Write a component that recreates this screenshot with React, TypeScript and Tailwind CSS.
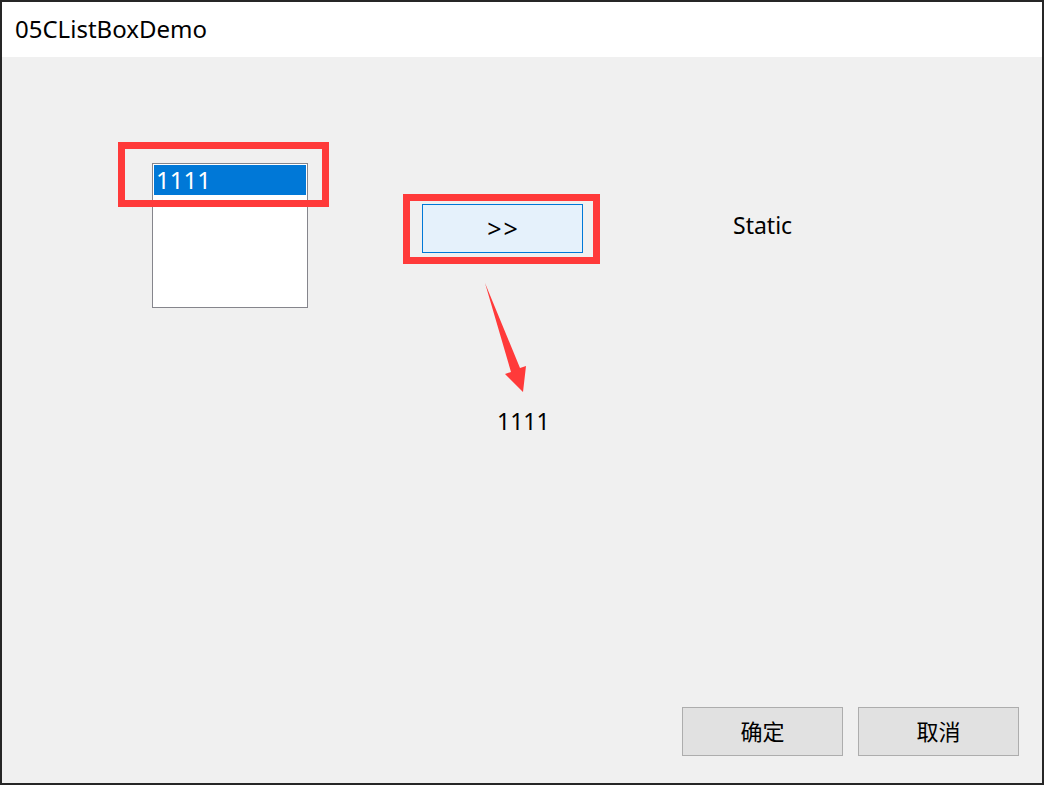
const font = "font-['Noto_Sans','Noto_Sans_CJK_SC',sans-serif]";

function RedBox({ className }: { className: string }) {
  return (
    <div
      className={`pointer-events-none absolute border-[7px] border-[#ff3a3a] ${className}`}
    />
  );
}

export default function App() {
  return (
    <div
      className={`w-[1044px] h-[785px] bg-[#262626] p-[2px] flex flex-col text-black ${font}`}
    >
      {/* Title bar */}
      <div className="h-[55px] bg-white flex items-center pl-[13px] pb-[2px] text-[24px]">
        05CListBoxDemo
      </div>

      {/* Client area */}
      <div className="flex-1 bg-[#f0f0f0] relative flex flex-col">
        <div className="flex items-start pl-[150px] pt-[106px]">
          {/* List box */}
          <div className="relative">
            <div className="w-[156px] h-[145px] border border-[#85858c] bg-white p-px">
              <div className="h-[30px] bg-[#0078d7] text-white text-[24px] leading-[30px] pl-[2px]">
                1111
              </div>
            </div>
            <RedBox className="-left-[34px] -top-[21px] w-[211px] h-[65px]" />
          </div>

          {/* Button + result */}
          <div className="ml-[114px] mt-[41px] flex flex-col">
            <div className="relative">
              <button className="w-[161px] h-[49px] border border-[#0078d7] bg-[#e5f1fb] text-[25px] tracking-[2px] leading-none flex items-center justify-center pl-[2px] pb-[1px]">
                &gt;&gt;
              </button>
              <RedBox className="-left-[19px] -top-[10px] w-[197px] h-[70px]" />
            </div>
            <div className="ml-[75px] mt-[153px] text-[23px] leading-[30px]">1111</div>
          </div>

          {/* Static */}
          <div className="ml-[150px] mt-[47px] text-[23px] leading-[30px]">Static</div>
        </div>

        {/* Arrow */}
        <svg
          className="absolute left-[478px] top-[223px]"
          width="50"
          height="116"
          viewBox="0 0 50 116"
        >
          <polygon
            points="5,3 40,88 46,86 43,112 25,94 31,92"
            fill="#ff3a3a"
          />
        </svg>

        {/* Dialog buttons */}
        <div className="mt-auto flex justify-end gap-[15px] pr-[23px] pb-[27px]">
          <button className="w-[161px] h-[49px] border border-[#adadad] bg-[#e1e1e1] text-[22px]">
            确定
          </button>
          <button className="w-[161px] h-[49px] border border-[#adadad] bg-[#e1e1e1] text-[22px]">
            取消
          </button>
        </div>
      </div>
    </div>
  );
}
